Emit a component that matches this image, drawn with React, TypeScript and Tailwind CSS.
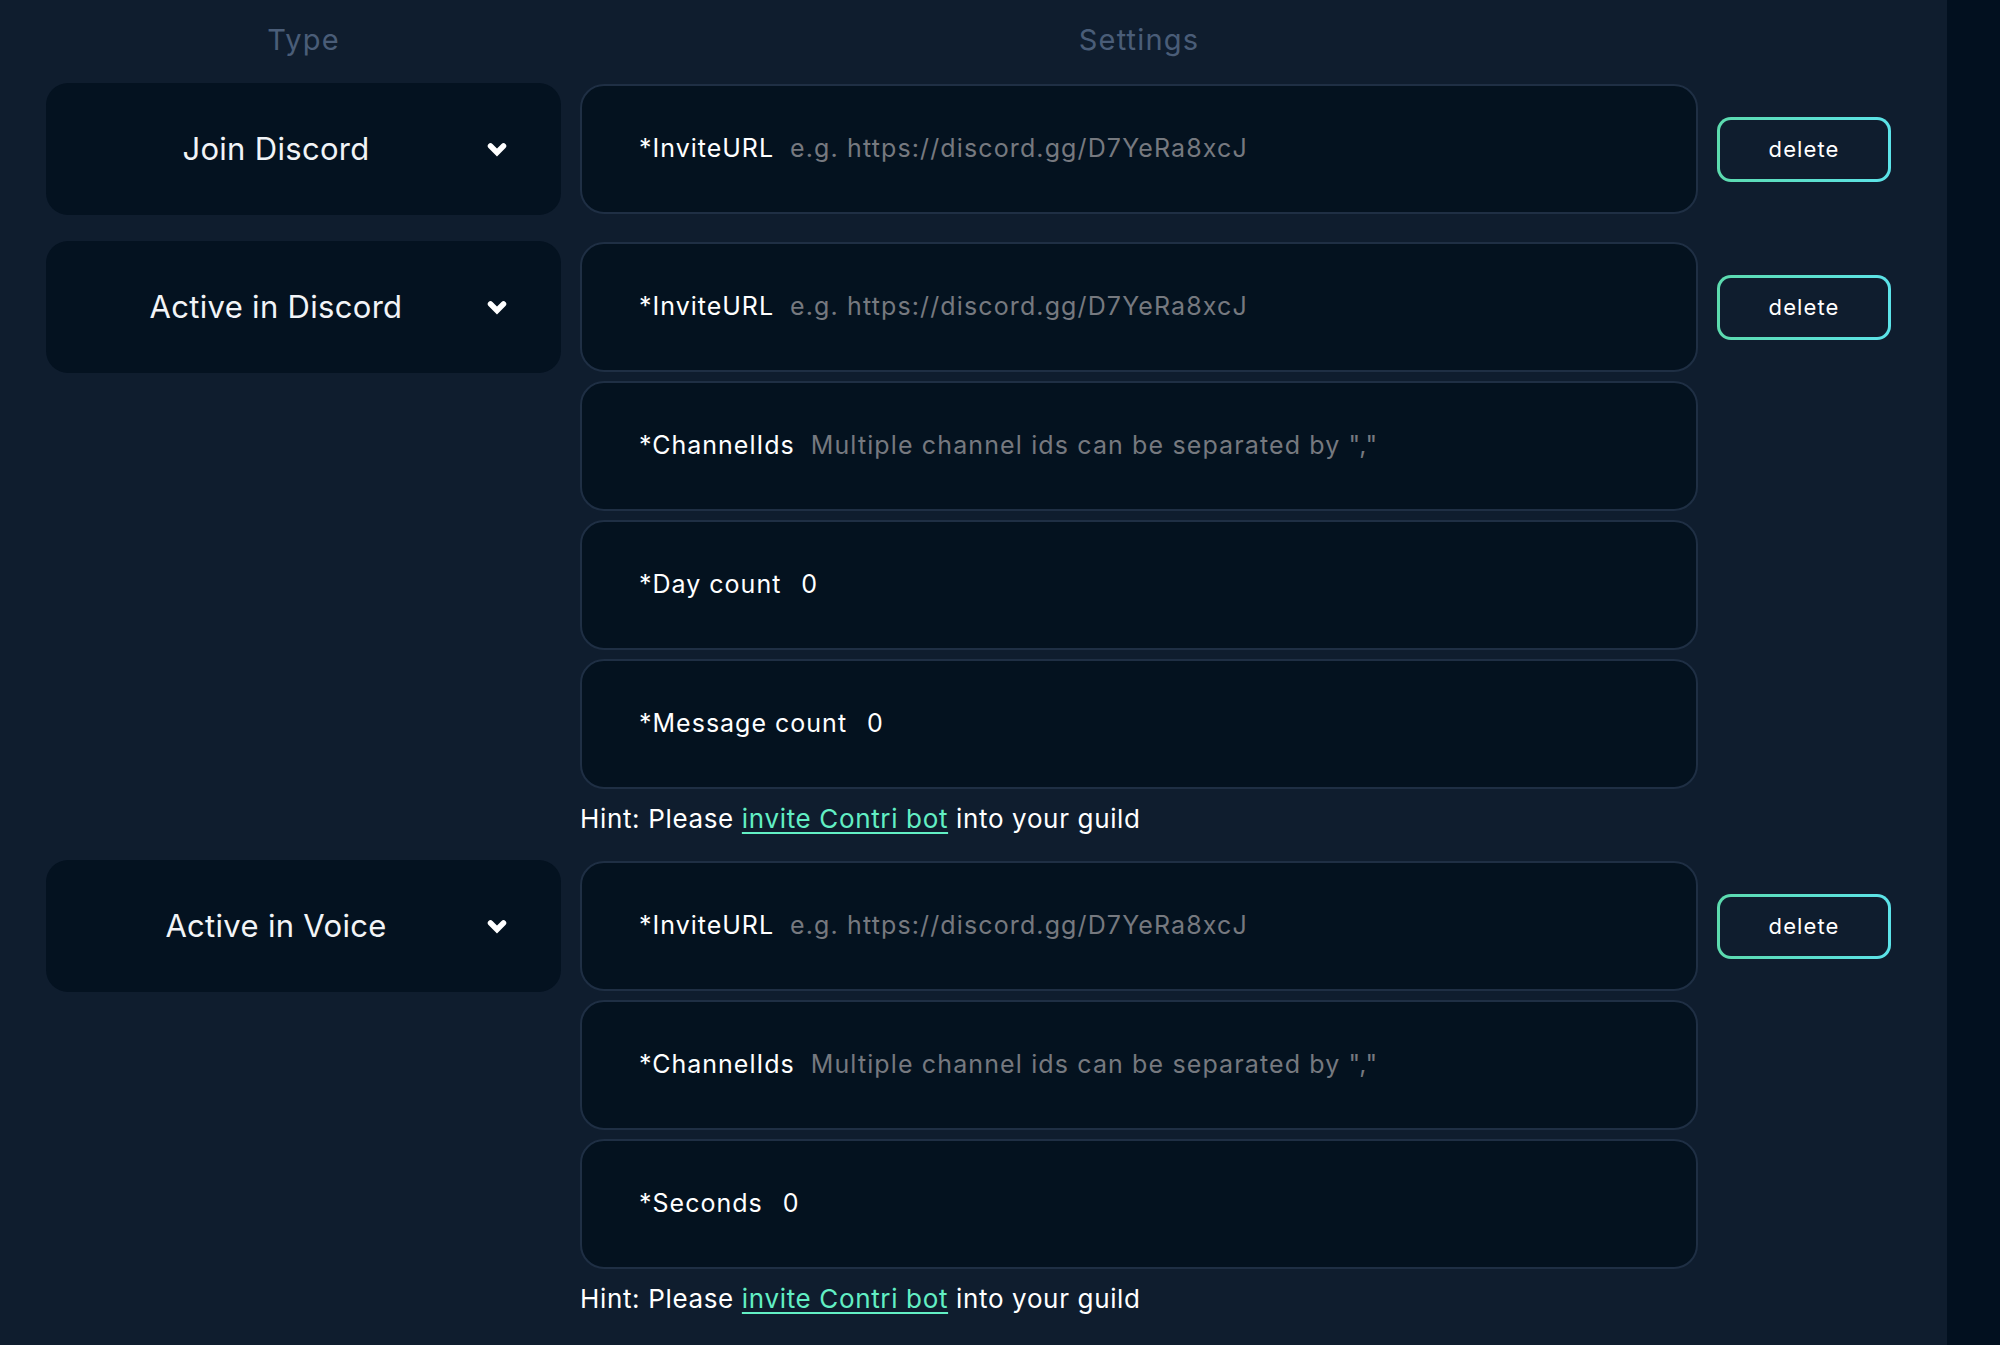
interface Field {
  label: string;
  placeholder?: string;
  value?: string;
}

interface Condition {
  type: string;
  fields: Field[];
  hint: boolean;
}

const INVITE: Field = {
  label: "*InviteURL",
  placeholder: "e.g. https://discord.gg/D7YeRa8xcJ",
};

const CHANNELS: Field = {
  label: "*ChannelIds",
  placeholder: 'Multiple channel ids can be separated by ","',
};

const CONDITIONS: Condition[] = [
  { type: "Join Discord", fields: [INVITE], hint: false },
  {
    type: "Active in Discord",
    fields: [
      INVITE,
      CHANNELS,
      { label: "*Day count", value: "0" },
      { label: "*Message count", value: "0" },
    ],
    hint: true,
  },
  {
    type: "Active in Voice",
    fields: [INVITE, CHANNELS, { label: "*Seconds", value: "0" }],
    hint: true,
  },
];

function Chevron() {
  return (
    <svg viewBox="0 0 20 15" className="h-[15px] w-[20px] shrink-0 text-white">
      <polyline
        points="3.5,4 10,10.5 16.5,4"
        fill="none"
        stroke="currentColor"
        strokeWidth={5.5}
        strokeLinecap="round"
        strokeLinejoin="miter"
      />
    </svg>
  );
}

function TypeSelect({ label }: { label: string }) {
  return (
    <div className="flex h-[132px] w-[515px] shrink-0 items-center rounded-[22px] bg-[#041220] pl-[19px] pr-[54px]">
      <span className="flex-1 text-center text-[31px] tracking-[0.01em] text-[#f2f4f7]">
        {label}
      </span>
      <Chevron />
    </div>
  );
}

function SettingField({ field }: { field: Field }) {
  return (
    <div className="flex h-[130px] items-center gap-[16px] rounded-[24px] border-2 border-[#1f2f44] bg-[#04121f] pl-[57px] text-[25px] tracking-[0.04em]">
      <span className="text-white">{field.label}</span>
      {field.placeholder && (
        <span className="tracking-[0.045em] text-[#76797f]">
          {field.placeholder}
        </span>
      )}
      {field.value && <span className="ml-[4px] text-white">{field.value}</span>}
    </div>
  );
}

function DeleteButton() {
  return (
    <div className="flex h-[132px] w-[174px] shrink-0 items-center">
      <button className="h-[65px] w-full rounded-[14px] bg-gradient-to-r from-[#5cdbae] to-[#5ce3e9] p-[3px]">
        <span className="flex h-full w-full items-center justify-center rounded-[11px] bg-[#0f1d2e] text-[22px] tracking-[0.05em] text-white">
          delete
        </span>
      </button>
    </div>
  );
}

export default function App() {
  return (
    <div
      className="flex min-h-screen w-full bg-[#0f1d2e]"
      style={{ fontFamily: 'Inter, "Noto Sans", sans-serif' }}
    >
      <main className="flex-1 pl-[46px]">
        <div className="flex h-[80px] items-center gap-[19px] text-[29px] tracking-[0.04em] text-[#4a5d78]">
          <p className="w-[515px] text-center">Type</p>
          <p className="w-[1118px] text-center">Settings</p>
        </div>

        <div className="mt-[3px] flex flex-col gap-[26px]">
          {CONDITIONS.map((c) => (
            <div key={c.type} className="flex items-start gap-[19px]">
              <TypeSelect label={c.type} />
              <div className="flex w-[1118px] shrink-0 flex-col pt-[1px]">
                <div className="flex flex-col gap-[9px]">
                  {c.fields.map((f) => (
                    <SettingField key={f.label} field={f} />
                  ))}
                </div>
                {c.hint && (
                  <p className="mt-[15px] text-[26px] leading-[30px] tracking-[0.025em] text-white">
                    Hint: Please{" "}
                    <a
                      href="#"
                      className="text-[#62efc4] underline decoration-2 underline-offset-4"
                    >
                      invite Contri bot
                    </a>{" "}
                    into your guild
                  </p>
                )}
              </div>
              <DeleteButton />
            </div>
          ))}
        </div>
      </main>
      <aside className="w-[53px] shrink-0 bg-[#02101f]" />
    </div>
  );
}
